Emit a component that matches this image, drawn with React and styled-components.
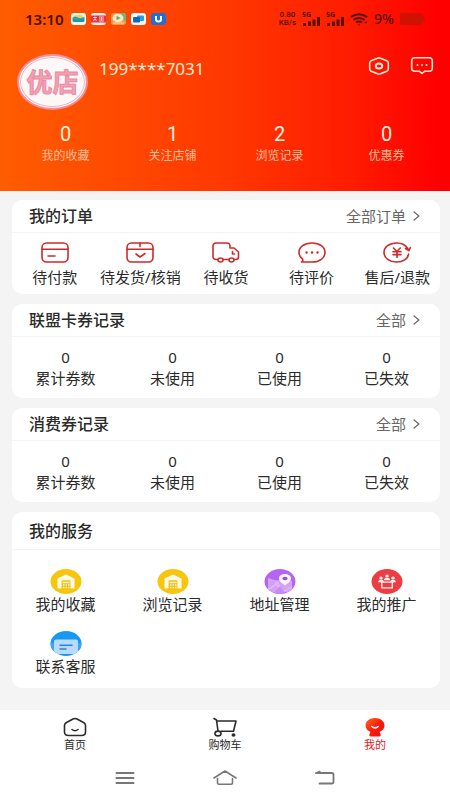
import React, { useState } from "react";
import styled, { createGlobalStyle } from "styled-components";

const GlobalStyle = createGlobalStyle`
  * {
    box-sizing: border-box;
  }
  body {
    margin: 0;
    background: #f4f4f4;
    color: #2b2b2b;
    font-family: "Noto Sans", "Noto Sans CJK SC", sans-serif;
  }
  button {
    border: 0;
    padding: 0;
    background: none;
    color: inherit;
    font: inherit;
    cursor: pointer;
  }
  a {
    color: inherit;
    text-decoration: none;
  }
  svg {
    display: block;
    flex: none;
  }
`;

const Page = styled.div`
  display: flex;
  flex-direction: column;
  min-height: 100vh;
`;

/* header */
const Header = styled.header`
  padding-bottom: 26px;
  background: linear-gradient(90deg, #ff5c00 0%, #ff3800 50%, #ff1c00 78%, #ff0000 97%);
  color: #ffe9d2;
`;
const StatusBar = styled.div`
  display: flex;
  align-items: center;
  justify-content: space-between;
  height: 38px;
  padding: 0 25px;
  color: #561004;
`;
const StatusGroup = styled.div`
  display: flex;
  align-items: center;
  gap: ${(props) => props.$gap}px;
`;
const Clock = styled.time`
  margin-right: 3px;
  color: #4a1000;
  font-size: 15px;
  font-weight: 600;
  line-height: 20px;
`;
const NetSpeed = styled.div`
  display: flex;
  flex-direction: column;
  align-items: center;
  font-family: Roboto, sans-serif;
  font-size: 8px;
  font-weight: 500;
  line-height: 8px;
`;
const Signal = styled.div`
  display: flex;
  flex-direction: column;
  font-size: 7px;
  font-weight: 700;
  line-height: 5px;
`;
const Battery = styled.div`
  font-size: 14px;
  font-weight: 500;
  line-height: 16px;
`;
const Profile = styled.div`
  display: flex;
  align-items: flex-start;
  padding: 16px 16px 0 17px;
`;
const Avatar = styled.div`
  display: flex;
  align-items: center;
  justify-content: center;
  width: 71px;
  height: 56px;
  border: 2px solid #f58f9f;
  border-radius: 50%;
  background: #fdf8f8;
  box-shadow: inset 0 0 0 1px #fff, inset 0 0 0 2px #f3b3bf;
  color: #f4a0b5;
  font-size: 26px;
  font-weight: 700;
  line-height: 32px;
  -webkit-text-stroke: 1px #ea8ca2;
`;
const Phone = styled.h1`
  flex: 1;
  margin: 5px 0 0 11px;
  font-size: 17px;
  font-weight: 400;
  line-height: 20px;
`;
const HeaderActions = styled.div`
  display: flex;
  gap: 20px;
  padding-top: 2px;
`;
const HeaderStats = styled.div`
  display: grid;
  grid-template-columns: repeat(4, 1fr);
  padding: 12px 10px 0 12px;
`;
const HeaderStat = styled.a`
  display: flex;
  flex-direction: column;
  align-items: center;
  color: #ffbd9c;
  font-size: 12px;
  line-height: 18px;

  strong {
    color: #fff0dc;
    font-family: Roboto, sans-serif;
    font-size: 20px;
    font-weight: 400;
    line-height: 25px;
  }
`;

/* cards */
const Content = styled.main`
  display: flex;
  flex: 1;
  flex-direction: column;
  gap: 10px;
  padding: 9px 10px 21px 12px;
`;
const Card = styled.section`
  border-radius: 10px;
  background: #fff;
`;
const CardHead = styled.div`
  display: flex;
  align-items: center;
  justify-content: space-between;
  height: ${(props) => (props.$tall ? 38 : 33)}px;
  padding: 0 20px 0 17px;
  border-bottom: 1px solid #f3f3f3;
`;
const CardTitle = styled.h2`
  margin: 0;
  font-size: 16px;
  font-weight: 500;
  line-height: 20px;
`;
const MoreLink = styled.a`
  display: flex;
  align-items: center;
  gap: 7px;
  color: #666;
  font-size: 15px;
  line-height: 20px;
`;
const Orders = styled.div`
  display: grid;
  grid-template-columns: repeat(5, 1fr);
  padding: 9px 0 7px;
`;
const OrderItem = styled.button`
  display: flex;
  flex-direction: column;
  align-items: center;
  gap: 4px;
  font-size: 15px;
  line-height: 20px;
  white-space: nowrap;

  svg {
    color: #cf2a2a;
  }
`;
const Records = styled.div`
  display: grid;
  grid-template-columns: repeat(4, 1fr);
  padding: 11px 0 10px;
`;
const Record = styled.div`
  display: flex;
  flex-direction: column;
  align-items: center;
  gap: 2px;
  font-size: 15px;
  line-height: 19px;
`;
const Services = styled.div`
  display: grid;
  grid-template-columns: repeat(4, 1fr);
  row-gap: 17px;
  padding: 19px 0 12px;
`;
const Service = styled.button`
  display: flex;
  flex-direction: column;
  align-items: center;
  font-size: 15px;
  line-height: 20px;
`;

/* bottom */
const Footer = styled.footer`
  background: #fff;
`;
const TabBar = styled.nav`
  display: grid;
  grid-template-columns: repeat(3, 1fr);
  padding: 7px 0 4px;
`;
const Tab = styled.button`
  display: flex;
  flex-direction: column;
  align-items: center;
  gap: 1px;
  color: ${(props) => (props.$active ? "#e02020" : "#2b2b2b")};
  font-size: 11px;
  line-height: 14px;
`;
const SystemNav = styled.nav`
  display: flex;
  justify-content: center;
  gap: 76px;
  padding: 12px 0;
  color: #777;
`;

/* icons */
const Stroke = ({ width, height, children, strokeWidth = 1.6, ...rest }) => (
  <svg
    width={width}
    height={height}
    viewBox={`0 0 ${width} ${height}`}
    fill="none"
    stroke="currentColor"
    strokeWidth={strokeWidth}
    strokeLinecap="round"
    strokeLinejoin="round"
    aria-hidden="true"
    {...rest}
  >
    {children}
  </svg>
);

const Chevron = () => (
  <Stroke width={7} height={10} strokeWidth={1.2}>
    <path d="M1 1 6 5 1 9" />
  </Stroke>
);

const AppIcons = () => (
  <>
    <svg width="15" height="12" viewBox="0 0 15 12" aria-hidden="true">
      <rect width="15" height="12" rx="3" fill="#f4faef" />
      <path d="M2 5Q2 2 5 2H10Q13 2 13 5Z" fill="#f4d552" />
      <path d="M1.500 4.500Q4 3 7 4.500T13.500 4V8Q13.500 9 12 9H3Q1.500 9 1.500 8Z" fill="#1597c9" />
      <path d="M2 6Q7 7 13 5.500V4.500Q7 6 2 4.500Z" fill="#28b593" />
    </svg>
    <svg width="15" height="12" viewBox="0 0 15 12" aria-hidden="true">
      <rect width="15" height="12" rx="3" fill="#fbeeee" />
      <rect y="2.500" width="15" height="7" fill="#e8313d" />
      <path d="M2 4.500h4M4 3.500v4M2 7.500l2-1 2 1M8 4h5M8 6h5M8 8h5M10.500 4v4" stroke="#fff" strokeWidth=".7" fill="none" />
    </svg>
    <svg width="15" height="12" viewBox="0 0 15 12" aria-hidden="true">
      <rect width="15" height="12" rx="3" fill="#f19a4b" />
      <path d="M8 0h4q3 0 3 3v5L8 5Z" fill="#68b978" />
      <ellipse cx="7" cy="5" rx="5.500" ry="4.300" fill="#f9e6c8" />
      <path d="M5.500 2.800 9.500 5l-4 2.200Z" fill="#69aa54" />
      <path d="M2 10h11" stroke="#f8dfb6" />
    </svg>
    <svg width="15" height="12" viewBox="0 0 15 12" aria-hidden="true">
      <rect width="15" height="12" rx="3" fill="#f6fbff" />
      <rect x="6" y="2.500" width="7" height="5.500" rx="1" fill="#1ca4e4" />
      <rect x="2" y="4" width="7" height="5.500" rx="1" fill="#1663c7" />
    </svg>
    <svg width="15" height="12" viewBox="0 0 15 12" aria-hidden="true">
      <rect width="15" height="12" rx="3" fill="#1f6fd6" />
      <path d="M5 3v3.500Q5 8.500 7.500 8.500T10 6.500V3" fill="none" stroke="#fff" strokeWidth="2" />
    </svg>
  </>
);

const SignalBars = () => (
  <svg width="18" height="9" viewBox="0 0 18 9" fill="currentColor" aria-hidden="true">
    <path d="M1 6h3v3H1zM6 4.500h3V9H6zM10.500 2.500h3V9h-3zM15 0h3v9h-3z" />
  </svg>
);

const Wifi = () => (
  <Stroke width={18} height={13} strokeWidth={2} strokeLinecap="butt">
    <path d="M.8 4Q9-1.500 17.200 4M3.500 6.800Q9 3 14.500 6.800M6 9.500Q9 7.500 12 9.500" />
    <path d="M7.500 11.500h3L9 12.800Z" fill="currentColor" stroke="none" />
    <path d="M14.500 9.500h2.500" strokeWidth="1.500" />
  </Stroke>
);

const Settings = () => (
  <Stroke width={22} height={20}>
    <path d="M9.500 2.300Q11 1.500 12.500 2.300L18.800 4.800Q20.300 5.500 20.300 7v6q0 1.500-1.500 2.200l-6.300 2.500q-1.500.7-3 0L3.200 15.200Q1.700 14.500 1.700 13V7q0-1.500 1.500-2.200Z" />
    <ellipse cx="11" cy="10" rx="3.200" ry="2.600" strokeWidth="2" />
  </Stroke>
);

const Message = () => (
  <Stroke width={24} height={20}>
    <path d="M5 1.700h14q3.300 0 3.300 3v7.600q0 3-3.300 3h-4.500L12 17.500l-2.500-2.200H5q-3.300 0-3.300-3V4.700q0-3 3.300-3Z" />
    <path d="M7.500 9h.1M12 9h.1M16.500 9h.1" strokeWidth="1.800" />
  </Stroke>
);

const PayIcon = () => (
  <Stroke width={28} height={21}>
    <rect x="1" y="1" width="26" height="19" rx="4.500" />
    <path d="M1 7.200h26M7 14h7" />
  </Stroke>
);

const DeliverIcon = () => (
  <Stroke width={28} height={21}>
    <rect x="1" y="1" width="26" height="19" rx="4.500" />
    <path d="M1 7.200h26M14 1v3.500M10 12l4 3 5-3.500" />
  </Stroke>
);

const TruckIcon = () => (
  <Stroke width={28} height={21}>
    <path d="M6 17.500H4.500Q1 17.500 1 14.500V4q0-3 3.500-3h10Q18 1 18 4v2h4l4.500 4v5q0 2.500-3 2.500H22M11 17.500h6M20.500 9.500v2.500h2" />
    <ellipse cx="8.500" cy="18" rx="2.500" ry="2" />
    <ellipse cx="19.500" cy="18" rx="2.500" ry="2" />
  </Stroke>
);

const CommentIcon = () => (
  <Stroke width={28} height={21}>
    <path d="M4.500 17Q1 14.500 1 10.500C1 5 6.500 1 14 1s13 4 13 9.500S21.500 20 14 20H3.500q2-1 1-3Z" />
    <path d="M8.500 10.500h.1M14 10.500h.1M19.500 10.500h.1" strokeWidth="2.400" />
  </Stroke>
);

const RefundIcon = () => (
  <Stroke width={28} height={21}>
    <path d="M25 7C23 3.300 19 1 13.800 1 6.500 1 1 5 1 10.500S6.500 20 13.500 20c6.500 0 11.500-3 12-8M22.500 6.500l3.300 2.200L27.500 5.500" />
    <path d="M10.500 6l3.300 3.500L17.300 6M10 9.700h8M10 12.600h8M14 9.500v6" />
  </Stroke>
);

const Warehouse = () => (
  <svg width="32" height="25" viewBox="0 0 32 25" aria-hidden="true">
    <ellipse cx="16" cy="12.500" rx="15.500" ry="12.500" fill="#f5c60d" />
    <path d="M7.500 9.500 16 5.500l8.500 4V19.500h-4V11.500h-9v8h-4Z" fill="#fffbe6" />
    <path d="M12.500 11.500h7v8h-7Z" fill="#eebc18" />
    <path d="M12.500 13.500h7M13 16h1.500m1-0h1.500m1 0h1.500M13 18.500h1.500m1 0h1.500m1 0h1.500" stroke="#fff5c4" strokeWidth="1.400" />
  </svg>
);

const MapPin = () => (
  <svg width="32" height="25" viewBox="0 0 32 25" aria-hidden="true">
    <defs>
      <clipPath id="mapClip">
        <ellipse cx="16" cy="12.500" rx="15.500" ry="12.500" />
      </clipPath>
    </defs>
    <g clipPath="url(#mapClip)">
      <path d="M0 0h32v25H0z" fill="#b565ef" />
      <path d="M4 9 12 11.500 21 10l7 2v11H4Z" fill="#d4a2f5" />
      <path d="m4 21 10-7 5 11M12 11.500v4l8 7 8-5" stroke="#dfbaf8" fill="none" strokeWidth="1.200" />
      <path d="m9 25 7-8 6 8Z" fill="#c68af2" />
    </g>
    <path d="M21 16.500c-4.500-3-6-5-6-7.200C15 6.800 17.700 5 21 5s6 1.800 6 4.300c0 2.200-1.500 4.200-6 7.200Z" fill="#fbf3ff" />
    <ellipse cx="21" cy="9.500" rx="2.700" ry="1.800" fill="#9550ce" />
  </svg>
);

const Promote = () => (
  <svg width="32" height="25" viewBox="0 0 32 25" fill="#fff0ee" aria-hidden="true">
    <ellipse cx="16" cy="12.500" rx="15.500" ry="12.500" fill="#ee3c43" />
    <ellipse cx="16" cy="7" rx="1.800" ry="1.500" />
    <path d="M13 11.200q0-2.400 3-2.400t3 2.400Z" />
    <ellipse cx="10" cy="9" rx="1.800" ry="1.500" />
    <path d="M7 13.200q0-2.500 3-2.500t3 2.500Z" />
    <ellipse cx="22" cy="9" rx="1.800" ry="1.500" />
    <path d="M19 13.200q0-2.500 3-2.500t3 2.500Z" />
    <path d="M9.500 13.200h13M10.800 13.500v5.300h10.500v-5.300" fill="none" stroke="#fff0ee" strokeWidth="1.300" />
  </svg>
);

const Support = () => (
  <svg width="32" height="25" viewBox="0 0 32 25" aria-hidden="true">
    <defs>
      <clipPath id="supportClip">
        <ellipse cx="16" cy="12.500" rx="15.500" ry="12.500" />
      </clipPath>
    </defs>
    <g clipPath="url(#supportClip)">
      <path d="M0 0h32v25H0z" fill="#1798f3" />
      <path d="M4 10.500Q4 8.500 6 8.500H26Q28 8.500 28 10.500V23H4Z" fill="#b9daff" />
      <path d="M0 12h4v10H0zM28 12h4v10h-4z" fill="#3ba4f7" />
    </g>
    <path d="M10 14.300h12M10 18h6" stroke="#2a80e0" strokeWidth="1.500" strokeLinecap="round" />
  </svg>
);

const HomeTabIcon = () => (
  <Stroke width={24} height={20}>
    <path d="M10 2Q12 1 14 2l6.500 3.500q2 1 2 3V15q0 3.500-4 3.500h-13q-4 0-4-3.500V8.500q0-2 2-3Z" />
    <path d="M9 12.500q3 2.500 6 0" />
  </Stroke>
);

const CartTabIcon = () => (
  <Stroke width={24} height={20}>
    <path d="M1 1.500 3.500 3 5 14M3.700 4H23l-2.500 10.300H8" />
    <ellipse cx="5" cy="16.500" rx="3" ry="2.400" />
    <ellipse cx="20.500" cy="18" rx="1.200" ry="1" fill="currentColor" />
  </Stroke>
);

const MineTabIcon = () => (
  <svg width="24" height="20" viewBox="0 0 24 20" aria-hidden="true">
    <defs>
      <linearGradient id="mineFill" x1="0" y1="0" x2="1" y2="1">
        <stop offset="0" stopColor="#ff6a1a" />
        <stop offset=".5" stopColor="#fb1c0c" />
        <stop offset="1" stopColor="#ee0a0a" />
      </linearGradient>
    </defs>
    <path d="M12 1c5.500 0 9.500 3.300 9.500 7.500 0 3-2 5.300-4.800 6.300 0 1.700 1 2.200 1 3.200 0 1-1 1.500-2 1.500H8.300c-1 0-2-.5-2-1.500s1-1.500 1-3.200C4.500 13.800 2.500 11.500 2.500 8.500 2.500 4.300 6.500 1 12 1Z" fill="url(#mineFill)" />
    <path d="M8.800 9.500q3.200 2.600 6.400 0" fill="none" stroke="#fff" strokeWidth="1.600" strokeLinecap="round" />
  </svg>
);

const profileStats = [
  { label: "我的收藏", value: 0 },
  { label: "关注店铺", value: 1 },
  { label: "浏览记录", value: 2 },
  { label: "优惠券", value: 0 },
];

const orders = [
  { label: "待付款", Icon: PayIcon },
  { label: "待发货/核销", Icon: DeliverIcon },
  { label: "待收货", Icon: TruckIcon },
  { label: "待评价", Icon: CommentIcon },
  { label: "售后/退款", Icon: RefundIcon },
];

const recordLabels = ["累计券数", "未使用", "已使用", "已失效"];

const services = [
  { label: "我的收藏", Icon: Warehouse },
  { label: "浏览记录", Icon: Warehouse },
  { label: "地址管理", Icon: MapPin },
  { label: "我的推广", Icon: Promote },
  { label: "联系客服", Icon: Support },
];

const tabs = [
  { key: "home", label: "首页", Icon: HomeTabIcon },
  { key: "cart", label: "购物车", Icon: CartTabIcon },
  { key: "mine", label: "我的", Icon: MineTabIcon },
];

const CouponCard = ({ title }) => (
  <Card>
    <CardHead>
      <CardTitle>{title}</CardTitle>
      <MoreLink href="#">
        全部 <Chevron />
      </MoreLink>
    </CardHead>
    <Records>
      {recordLabels.map((label) => (
        <Record key={label}>
          <span>0</span>
          <span>{label}</span>
        </Record>
      ))}
    </Records>
  </Card>
);

const App = () => {
  const [tab, setTab] = useState("mine");

  return (
    <Page>
      <GlobalStyle />
      <Header>
        <StatusBar>
          <StatusGroup $gap={5}>
            <Clock>13:10</Clock>
            <AppIcons />
          </StatusGroup>
          <StatusGroup $gap={6}>
            <NetSpeed>
              <span>0.80</span>
              <span>KB/s</span>
            </NetSpeed>
            <Signal>
              5G
              <SignalBars />
            </Signal>
            <Signal>
              5G
              <SignalBars />
            </Signal>
            <Wifi />
            <Battery>9%</Battery>
            <svg width="25" height="12" viewBox="0 0 25 12" aria-hidden="true">
              <path d="M2 0h18q3 0 3 3 2 .5 2 3t-2 3q0 3-3 3H2q-2 0-2-2V2q0-2 2-2Z" fill="#d01205" />
            </svg>
          </StatusGroup>
        </StatusBar>
        <Profile>
          <Avatar>优店</Avatar>
          <Phone>199****7031</Phone>
          <HeaderActions>
            <button type="button" aria-label="设置">
              <Settings />
            </button>
            <button type="button" aria-label="消息">
              <Message />
            </button>
          </HeaderActions>
        </Profile>
        <HeaderStats>
          {profileStats.map((item) => (
            <HeaderStat key={item.label} href="#">
              <strong>{item.value}</strong>
              {item.label}
            </HeaderStat>
          ))}
        </HeaderStats>
      </Header>

      <Content>
        <Card>
          <CardHead>
            <CardTitle>我的订单</CardTitle>
            <MoreLink href="#">
              全部订单 <Chevron />
            </MoreLink>
          </CardHead>
          <Orders>
            {orders.map(({ label, Icon }) => (
              <OrderItem key={label} type="button">
                <Icon />
                {label}
              </OrderItem>
            ))}
          </Orders>
        </Card>
        <CouponCard title="联盟卡券记录" />
        <CouponCard title="消费券记录" />
        <Card>
          <CardHead $tall>
            <CardTitle>我的服务</CardTitle>
          </CardHead>
          <Services>
            {services.map(({ label, Icon }) => (
              <Service key={label} type="button">
                <Icon />
                {label}
              </Service>
            ))}
          </Services>
        </Card>
      </Content>

      <Footer>
        <TabBar>
          {tabs.map(({ key, label, Icon }) => (
            <Tab
              key={key}
              type="button"
              $active={tab === key}
              onClick={() => setTab(key)}
            >
              <Icon />
              {label}
            </Tab>
          ))}
        </TabBar>
        <SystemNav>
          <button type="button" aria-label="菜单">
            <Stroke width={24} height={20} strokeWidth={2}>
              <path d="M3.500 5h17M3.500 10h17M3.500 15h17" />
            </Stroke>
          </button>
          <button type="button" aria-label="主屏幕">
            <Stroke width={24} height={20}>
              <path d="M1 10 12 3l11 7M4.500 10.500V15q0 1.200 1.500 1.200h12q1.500 0 1.500-1.200v-4.500" />
            </Stroke>
          </button>
          <button type="button" aria-label="返回">
            <Stroke width={24} height={20}>
              <path d="M6.500 15.500H19q1.500 0 1.500-1.500V6.500Q20.500 5 19 5H4" strokeWidth="1.800" />
              <path d="M2.500 5 7 3V5Z" fill="currentColor" strokeWidth="1" />
            </Stroke>
          </button>
        </SystemNav>
      </Footer>
    </Page>
  );
};

export default App;
